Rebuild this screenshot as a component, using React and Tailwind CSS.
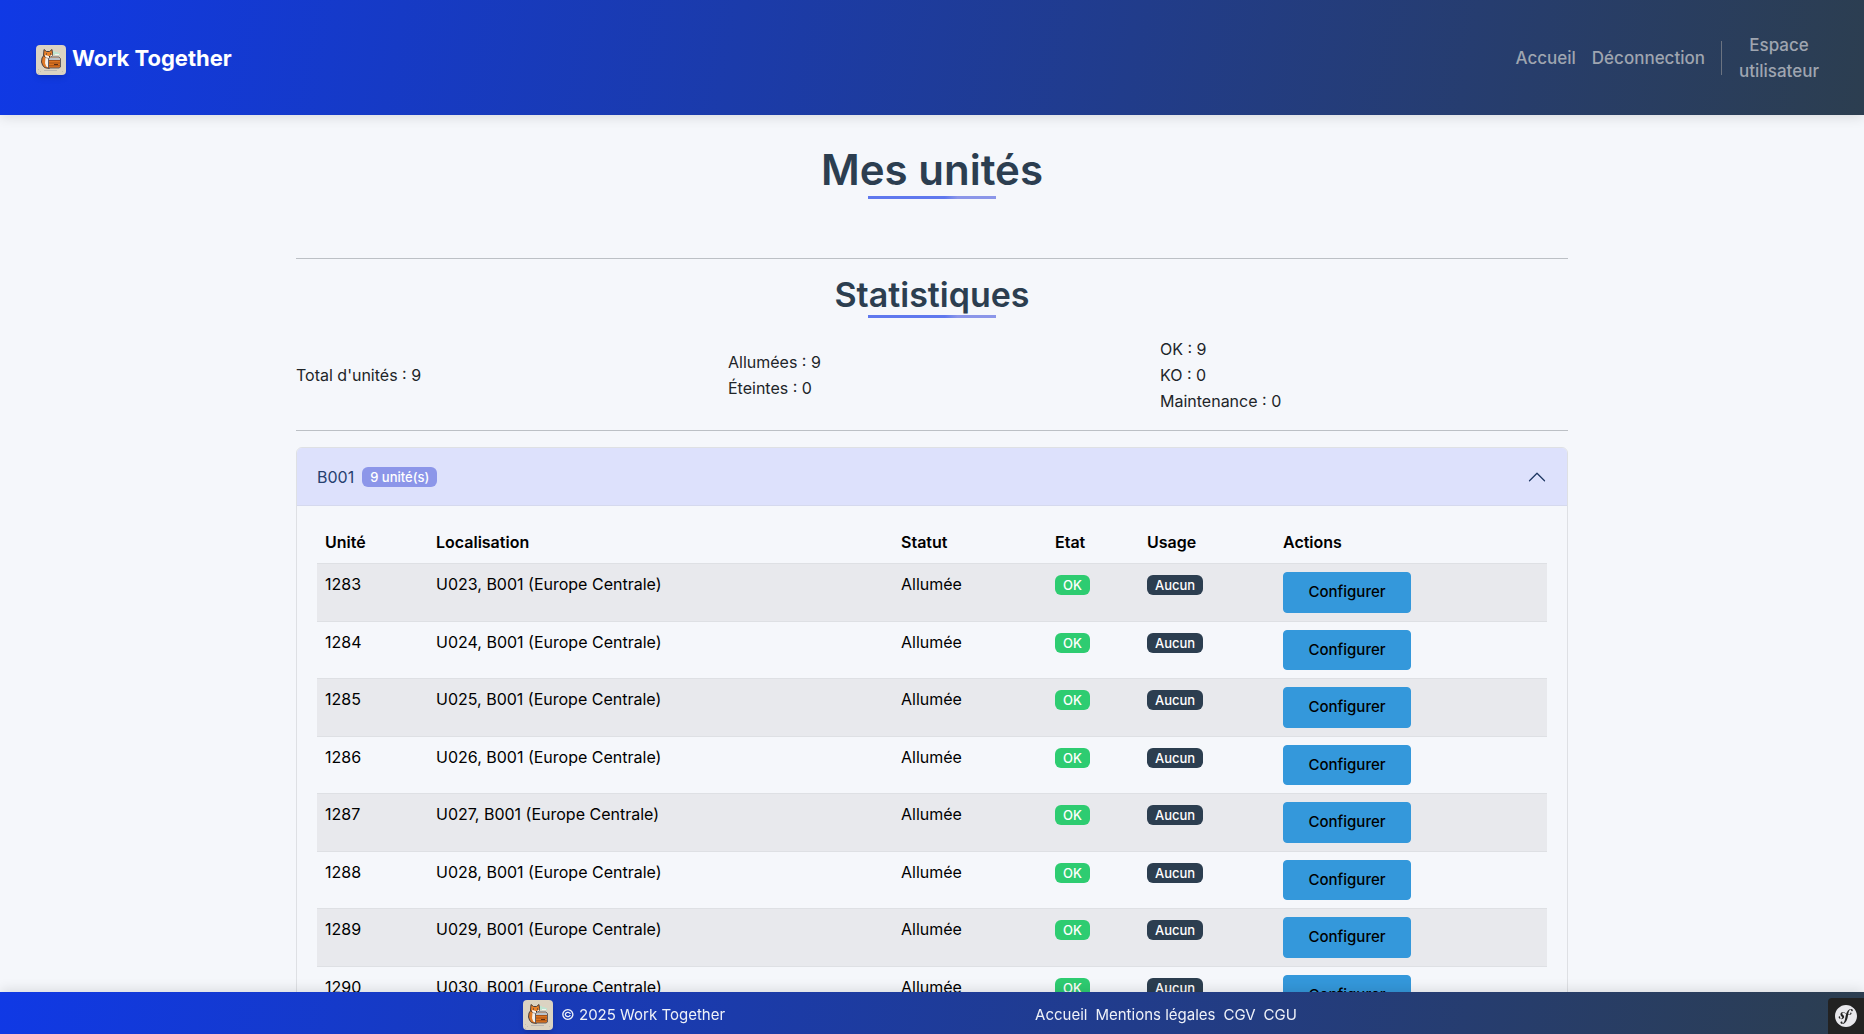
import React, { useState } from "react";
import { SiSymfony } from "react-icons/si";

const units = [
  { id: 1283, location: "U023, B001 (Europe Centrale)" },
  { id: 1284, location: "U024, B001 (Europe Centrale)" },
  { id: 1285, location: "U025, B001 (Europe Centrale)" },
  { id: 1286, location: "U026, B001 (Europe Centrale)" },
  { id: 1287, location: "U027, B001 (Europe Centrale)" },
  { id: 1288, location: "U028, B001 (Europe Centrale)" },
  { id: 1289, location: "U029, B001 (Europe Centrale)" },
  { id: 1290, location: "U030, B001 (Europe Centrale)" },
  { id: 1291, location: "U031, B001 (Europe Centrale)" },
];

const Logo = () => (
  <svg
    viewBox="0 0 30 30"
    className="size-[30px] shrink-0 rounded-sm shadow-md"
    aria-hidden="true"
  >
    <rect width="30" height="30" fill="#dbd3c2" />
    <path d="M17 6h2v1h3v1h2v2h-7z" fill="#bfe3cf" />
    <path d="M19 9h4v1h-4z" fill="#eef6ee" />
    {/* tail and body */}
    <path
      d="M8 10L6 13 5.500 17 6.500 20 8.500 22.500l3 .8h2V12z"
      fill="#e07a26"
      stroke="#3d3434"
      strokeWidth="0.9"
    />
    <path d="M9.500 13H13v9h-2l-1-1-1-3z" fill="#f6f1ea" />
    {/* head */}
    <path
      d="M8 4.500l2.500 2h3l2.500-2 .5 4-.5 2.500-3 2-3.500-.5L7.500 10z"
      fill="#e8822b"
      stroke="#3d3434"
      strokeWidth="0.9"
    />
    <path d="M9 10l2 .5 2.500 1L16 9.500V11l-3 2-3.500-.5z" fill="#fbf7f1" />
    <path d="M10 8.500h1v1h-1zM14 8.500h1v1h-1zM13 11h1v1h-1z" fill="#2b2b33" />
    {/* crate */}
    <path
      d="M12.500 14L14 12h9l1.500 1.500V22L23 23H12.500z"
      fill="#de751f"
      stroke="#55555f"
      strokeWidth="0.9"
    />
    <path d="M13 14l1-1.500h9l1 1V15H13z" fill="#b9c3cc" />
    <path
      d="M13 15.500h11M13 18h11M13 20.700h11"
      stroke="#8a4316"
      strokeWidth="0.7"
    />
    <path d="M18 19h4v1h-4z" fill="#5b2d14" />
    <path d="M8 25.500h13" stroke="#aaa9ae" strokeWidth="0.7" />
    <path
      d="M2 24h1v1H2zM4 26h1v1H4zM2 28h1v1H2zM26 26h1v1h-1z"
      fill="#c4bdb0"
    />
  </svg>
);

const Badge = ({ className, children }) => (
  <span
    className={`inline-block rounded-md px-2 text-[13px] leading-5 font-medium text-white ${className}`}
  >
    {children}
  </span>
);

const Underline = () => (
  <div className="h-[3px] w-32 mx-auto bg-linear-to-r from-[#5f78ee] from-60% to-[#8b96e9] to-70%" />
);

const Navbar = () => (
  <header className="relative z-10 flex items-center justify-between px-9 pt-8 pb-[31px] bg-linear-[100deg,#1039e5,#2c3e50] shadow-[0_2px_12px_rgba(0,0,0,0.12)]">
    <a
      href="#"
      className="flex items-center gap-1.5 text-[22px] leading-8 font-bold text-white"
    >
      <span className="pt-1">
        <Logo />
      </span>
      Work Together
    </a>
    <nav className="flex items-center gap-4 text-[17px] leading-[26px] font-medium text-[#9fa5b0]">
      <a href="#">Accueil</a>
      <a href="#">Déconnection</a>
      <span className="w-px h-[34px] bg-[#6b7381]" />
      <a href="#" className="w-[82px] mr-2 text-center">
        Espace utilisateur
      </a>
    </nav>
  </header>
);

const Stats = () => (
  <section className="border-y border-[#bcc0c5] pt-4 pb-4">
    <h2 className="text-[34px] leading-10 font-semibold text-center text-[#2c3e50]">
      Statistiques
    </h2>
    <Underline />
    <div className="grid grid-cols-3 gap-6 items-center mt-[18px] text-base leading-[26px] text-[#212529]">
      <p>Total d'unités : 9</p>
      <div>
        <p>Allumées : 9</p>
        <p>Éteintes : 0</p>
      </div>
      <div>
        <p>OK : 9</p>
        <p>KO : 0</p>
        <p>Maintenance : 0</p>
      </div>
    </div>
  </section>
);

const UnitTable = () => (
  <table className="w-full table-fixed text-left text-base leading-[26px] text-black">
    <thead>
      <tr className="border-b border-[#dee0e4]">
        <th className="w-[111px] p-2 font-semibold">Unité</th>
        <th className="p-2 font-semibold">Localisation</th>
        <th className="w-[154px] p-2 font-semibold">Statut</th>
        <th className="w-[92px] p-2 font-semibold">Etat</th>
        <th className="w-[136px] p-2 font-semibold">Usage</th>
        <th className="w-[272px] p-2 font-semibold">Actions</th>
      </tr>
    </thead>
    <tbody>
      {units.map((unit) => (
        <tr
          key={unit.id}
          className="border-b border-[#dee0e4] align-top odd:bg-[#e8e9ed]"
        >
          <td className="px-2 pt-[7px]">{unit.id}</td>
          <td className="px-2 pt-[7px]">{unit.location}</td>
          <td className="px-2 pt-[7px]">Allumée</td>
          <td className="px-2 pt-[7px]">
            <Badge className="bg-[#2ecc71]">OK</Badge>
          </td>
          <td className="px-2 pt-[7px]">
            <Badge className="bg-[#2c3e50]">Aucun</Badge>
          </td>
          <td className="p-2">
            <button
              type="button"
              className="block w-32 rounded-sm border border-[#3498db] bg-[#3498db] py-2 text-[15px] leading-normal font-medium"
            >
              Configurer
            </button>
          </td>
        </tr>
      ))}
    </tbody>
  </table>
);

const Rack = () => {
  const [open, setOpen] = useState(true);

  return (
    <section className="mt-4 rounded-md border border-[#dee0e4] overflow-hidden">
      <button
        type="button"
        aria-expanded={open}
        onClick={() => setOpen(!open)}
        className="flex w-full items-center px-5 py-4 bg-[#dde1fc] text-base leading-[26px] text-[#26406f] shadow-[inset_0_-1px_0_#d5d9ee]"
      >
        B001
        <Badge className="ml-2 bg-[#8c96e9]">9 unité(s)</Badge>
        <svg
          viewBox="0 0 16 16"
          className={`ml-auto size-5 ${open ? "rotate-180" : ""}`}
          fill="none"
          stroke="#1f3864"
          strokeLinecap="round"
          strokeLinejoin="round"
        >
          <path d="M2 5l6 6 6-6" />
        </svg>
      </button>
      {open && (
        <div className="px-5 pt-[15px] pb-4">
          <UnitTable />
        </div>
      )}
    </section>
  );
};

const Footer = () => (
  <footer className="fixed inset-x-0 bottom-0 z-10 flex h-[42px] items-center justify-center gap-[310px] pr-11 text-[15px] text-[#eef1f8] bg-linear-[100deg,#1039e5,#2c3e50] shadow-[0_-2px_12px_rgba(0,0,0,0.12)]">
    <div className="flex items-center gap-2 pt-1">
      <Logo />
      <span>© 2025 Work Together</span>
    </div>
    <nav className="flex gap-2 pt-1">
      <a href="#">Accueil</a>
      <a href="#">Mentions légales</a>
      <a href="#">CGV</a>
      <a href="#">CGU</a>
    </nav>
    <button
      type="button"
      aria-label="Symfony"
      className="absolute right-0 bottom-0 flex size-9 items-center justify-center rounded-tl-sm bg-[#222222]"
    >
      <SiSymfony size={22} className="text-[#e8e8ec]" />
    </button>
  </footer>
);

const App = () => {
  return (
    <div className="min-h-screen bg-[#f5f7fb] font-['Inter',sans-serif]">
      <Navbar />
      <main className="mx-auto max-w-[1272px] pt-[29px] pb-16">
        <h1 className="text-[42px] leading-[52px] font-semibold text-center text-[#2c3e50]">
          Mes unités
        </h1>
        <Underline />
        <div className="mt-[59px]">
          <Stats />
        </div>
        <Rack />
      </main>
      <Footer />
    </div>
  );
};

export default App;
